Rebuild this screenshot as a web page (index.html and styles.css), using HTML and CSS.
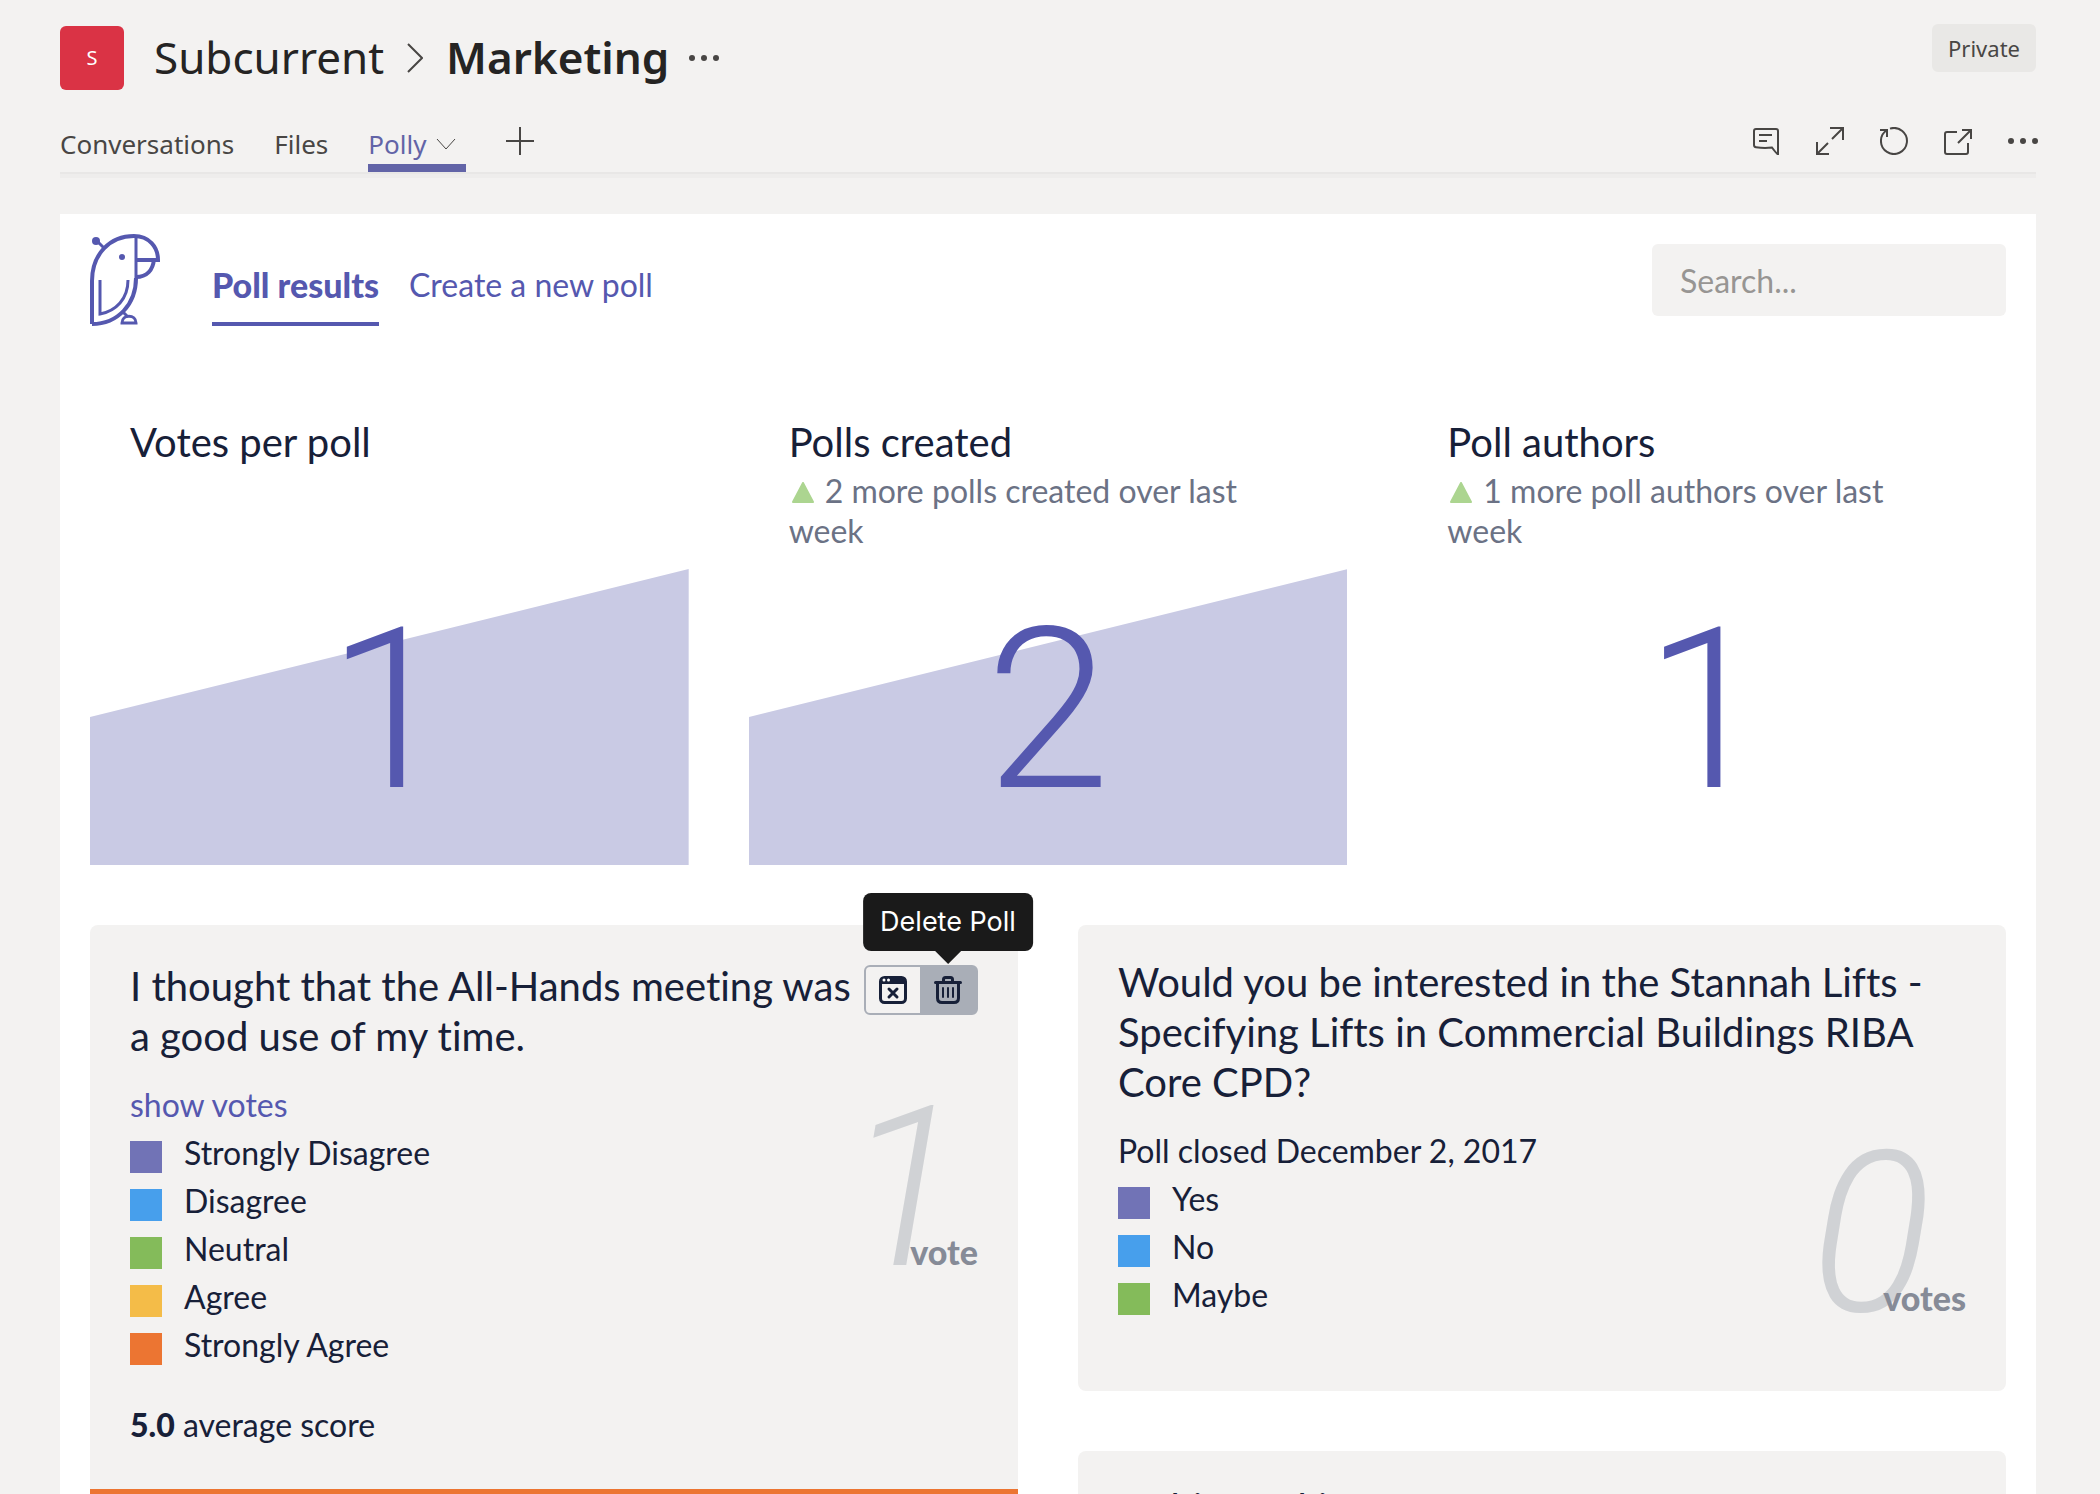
FILE: index.html
```html
<!DOCTYPE html>
<html lang="en">
<head>
<meta charset="utf-8">
<title>Polly – Marketing</title>
<link rel="stylesheet" href="styles.css">
</head>
<body>
<header class="channel">
  <div class="channel-top">
    <div class="avatar">S</div>
    <h1 class="crumbs">
      <span>Subcurrent</span>
      <svg class="crumb-arrow" width="16" height="30" viewBox="0 0 16 30" aria-hidden="true"><path d="M1 1 15 15 1 29"/></svg>
      <strong>Marketing</strong>
    </h1>
    <button class="icon-btn" aria-label="More channel options">
      <svg width="30" height="8" viewBox="0 0 30 8"><g class="fill"><circle cx="3" cy="4" r="3"/><circle cx="15" cy="4" r="3"/><circle cx="27" cy="4" r="3"/></g></svg>
    </button>
    <span class="badge">Private</span>
  </div>
  <nav class="channel-tabs">
    <a class="tab" href="#">Conversations</a>
    <a class="tab" href="#">Files</a>
    <a class="tab tab-active" href="#">Polly
      <svg width="20" height="12" viewBox="0 0 20 12" aria-hidden="true"><path d="M1 1 10 11 19 1"/></svg>
    </a>
    <button class="icon-btn add-tab" aria-label="Add a tab">
      <svg width="28" height="28" viewBox="0 0 28 28"><path d="M14 0V28M0 14H28"/></svg>
    </button>
    <div class="tools">
      <button class="icon-btn" aria-label="Show conversation">
        <svg width="28" height="28" viewBox="0 0 28 28"><path d="M4 2H24Q26 2 26 4V27.500Q24 26 20 20.500Q12 21.500 4 20.200Q2 20 2 18V4Q2 2 4 2ZM7 8H20M7 14H15"/></svg>
      </button>
      <button class="icon-btn" aria-label="Expand tab">
        <svg width="28" height="28" viewBox="0 0 28 28"><path d="M14 1H27V13M27 1 16 12M1 15V27H13M1 27 12 16"/></svg>
      </button>
      <button class="icon-btn" aria-label="Reload tab">
        <svg width="28" height="28" viewBox="0 0 28 28"><path d="M10 1.600A13 13 0 1 1 7 3M0 3H7V10"/></svg>
      </button>
      <button class="icon-btn" aria-label="Go to website">
        <svg width="28" height="28" viewBox="0 0 28 28"><path d="M13 5H3Q1 5 1 7V25Q1 27 3 27H22Q24 27 24 25V16M18 3H27V12M27 3 14 16"/></svg>
      </button>
      <button class="icon-btn" aria-label="More options">
        <svg width="30" height="8" viewBox="0 0 30 8"><g class="fill"><circle cx="3" cy="4" r="3"/><circle cx="15" cy="4" r="3"/><circle cx="27" cy="4" r="3"/></g></svg>
      </button>
    </div>
  </nav>
</header>

<main class="panel">
  <div class="panel-head">
    <svg class="logo" width="70" height="92" viewBox="0 0 70 92" role="img" aria-label="Polly">
      <path class="thick" d="M2 90V47C2 20 20 2 44 2C59 2 68 13 68 26H46"/>
      <path class="thick" d="M2 90C28 90 46 70 46 44"/>
      <path class="thin" d="M46 2V46M15 15 7 7"/>
      <path class="thick" d="M46 43C57 43 63 36 64 25"/>
      <path class="thin" d="M10 46V80C26 77 38 65 38 46M32 77 38 83"/>
      <path class="thin" d="M32 89H46C46 80 32 80 32 89Z"/>
      <circle cx="6" cy="7" r="4"/><circle cx="32" cy="23" r="3"/>
    </svg>
    <nav class="views">
      <a class="view view-active" href="#">Poll results</a>
      <a class="view" href="#">Create a new poll</a>
    </nav>
    <input class="search" type="search" placeholder="Search..." aria-label="Search polls">
  </div>

  <section class="metrics">
    <article class="metric">
      <h2>Votes per poll</h2>
      <div class="chart">
        <svg viewBox="0 0 100 100" preserveAspectRatio="none" aria-hidden="true"><path d="M0 50 100 0V100H0Z"/></svg>
        <span class="figure">1</span>
      </div>
    </article>
    <article class="metric">
      <h2>Polls created</h2>
      <p><svg class="up" width="22" height="21" viewBox="0 0 22 21" aria-hidden="true"><path d="M11 1 21 20H1Z"/></svg>2 more polls created over last week</p>
      <div class="chart">
        <svg viewBox="0 0 100 100" preserveAspectRatio="none" aria-hidden="true"><path d="M0 50 100 0V100H0Z"/></svg>
        <span class="figure">2</span>
      </div>
    </article>
    <article class="metric">
      <h2>Poll authors</h2>
      <p><svg class="up" width="22" height="21" viewBox="0 0 22 21" aria-hidden="true"><path d="M11 1 21 20H1Z"/></svg>1 more poll authors over last week</p>
      <div class="chart"><span class="figure">1</span></div>
    </article>
  </section>

  <section class="polls">
    <div class="poll-column">
      <article class="poll">
        <div class="poll-head poll-head-actions">
          <h2>I thought that the All-Hands meeting was a good use of my time.</h2>
          <div class="actions">
            <button class="action" aria-label="Close Poll">
              <svg width="28" height="28" viewBox="0 0 28 28"><rect x="1.500" y="1.500" width="25" height="25" rx="4"/><path class="fill" d="M1 8V5Q1 1 5 1H23Q27 1 27 5V8Z"/><path class="cross" d="M10 13 18 21M18 13 10 21"/><circle class="dot" cx="5" cy="4" r="1.500"/><circle class="dot" cx="9.500" cy="4" r="1.500"/></svg>
            </button>
            <button class="action action-hover" aria-label="Delete Poll">
              <svg width="28" height="28" viewBox="0 0 28 28"><path d="M1.500 6.500H26.500M9.500 6V3.500Q9.500 1.500 11.500 1.500H16.500Q18.500 1.500 18.500 3.500V6M3.500 7V22Q3.500 26.500 8 26.500H20Q24.500 26.500 24.500 22V7"/><path class="bars" d="M9 12V21M14 12V21M19 12V21"/></svg>
              <span class="tooltip" role="tooltip">Delete Poll</span>
            </button>
          </div>
        </div>
        <div class="poll-body">
          <div>
            <a class="note" href="#">show votes</a>
            <ul class="options">
              <li><i class="swatch c1"></i>Strongly Disagree</li>
              <li><i class="swatch c2"></i>Disagree</li>
              <li><i class="swatch c3"></i>Neutral</li>
              <li><i class="swatch c4"></i>Agree</li>
              <li><i class="swatch c5"></i>Strongly Agree</li>
            </ul>
          </div>
          <div class="tally tally-single"><span class="count">1</span><b>vote</b></div>
        </div>
        <p class="score"><b>5.0</b> average score</p>
        <div class="result-bar c5"></div>
      </article>
    </div>
    <div class="poll-column">
      <article class="poll">
        <div class="poll-head">
          <h2>Would you be interested in the Stannah Lifts - Specifying Lifts in Commercial Buildings RIBA Core CPD?</h2>
        </div>
        <div class="poll-body">
          <div>
            <span class="note">Poll closed December 2, 2017</span>
            <ul class="options">
              <li><i class="swatch c1"></i>Yes</li>
              <li><i class="swatch c2"></i>No</li>
              <li><i class="swatch c3"></i>Maybe</li>
            </ul>
          </div>
          <div class="tally"><span class="count">0</span><b>votes</b></div>
        </div>
      </article>
      <article class="poll">
        <div class="poll-head">
          <h2>Is this working</h2>
        </div>
      </article>
    </div>
  </section>
</main>
</body>
</html>
```
FILE: styles.css
```css
* { box-sizing: border-box; }
body {
  margin: 0;
  padding: 0 64px 0 60px;
  background: #f3f2f1;
  color: #172038;
  font: 32px/40px Lato, sans-serif;
  font-variant-ligatures: none;
}
h1, h2, p, ul { margin: 0; padding: 0; font-weight: 400; }
a { color: #5558af; text-decoration: none; }
svg { display: block; flex: none; }

/* Channel header */
.channel { font-family: "Noto Sans", sans-serif; color: #484644; }
.channel svg { fill: none; stroke: #484644; stroke-width: 2; }
.channel .fill { fill: #484644; stroke: none; }
.icon-btn { display: flex; padding: 0; border: 0; background: none; }
.channel-top { display: flex; align-items: center; height: 92px; padding-top: 24px; }
.avatar {
  width: 64px;
  height: 64px;
  margin-right: 30px;
  border-radius: 6px;
  background: #da3345;
  color: #fff;
  font-size: 20px;
  line-height: 64px;
  text-align: center;
}
.crumbs {
  display: flex;
  align-items: center;
  gap: 23px;
  margin-right: 20px;
  color: #252423;
  font-size: 44px;
  line-height: 60px;
}
.crumbs span, .crumbs strong { padding-bottom: 2px; }
.crumbs strong { font-weight: 600; }
.badge {
  align-self: flex-start;
  margin-left: auto;
  padding: 0 16px;
  border-radius: 6px;
  background: #e9e8e6;
  font-size: 22px;
  line-height: 48px;
}
.channel-tabs {
  display: flex;
  align-items: flex-end;
  gap: 40px;
  height: 86px;
  border-bottom: 4px solid #eeedec;
  box-shadow: inset 0 -2px #e8e7e6;
  padding-bottom: 2px;
}
.tab {
  display: flex;
  align-items: center;
  gap: 10px;
  padding-bottom: 2px;
  border-bottom: 8px solid transparent;
  color: #484644;
  font-size: 26px;
  line-height: 36px;
}
.tab-active { padding-right: 10px; border-color: #6264a7; color: #6264a7; }
.channel .tab-active svg { stroke-width: 1; }
.add-tab { margin-bottom: 17px; }
.tools { display: flex; align-items: center; gap: 36px; margin: 0 -2px 17px auto; }

/* Panel */
.panel { margin-top: 36px; padding: 20px 30px 60px; background: #fff; }
.panel-head { display: flex; align-items: flex-end; height: 92px; }
.logo { margin-right: 52px; fill: #5558af; }
.logo path { fill: none; stroke: #5558af; }
.logo .thick { stroke-width: 4; }
.logo .thin { stroke-width: 3; }
.views { display: flex; gap: 30px; }
.view { padding-bottom: 17px; border-bottom: 4px solid transparent; }
.view-active { border-color: #5558af; font-size: 34px; font-weight: 900; }
.search {
  width: 354px;
  height: 72px;
  margin: 0 0 10px auto;
  padding: 0 28px;
  border: 0;
  border-radius: 6px;
  background: #f3f2f1;
  color: inherit;
  font: inherit;
}
.search::placeholder { color: #979593; }

/* Metrics */
.metrics { display: grid; grid-template-columns: repeat(3, 1fr); gap: 60px; margin-top: 94px; }
.metric { display: flex; flex-direction: column; }
.metric h2 { padding: 0 40px; margin-bottom: 7px; font-size: 40px; line-height: 44px; }
.metric p { padding: 0 60px 0 40px; margin-bottom: 18px; color: #6b7285; }
.up { display: inline-block; margin: 0 11px 0 3px; fill: #acd590; stroke: #acd590; stroke-width: 2; stroke-linejoin: round; }
.chart { display: grid; height: 296px; margin-top: auto; }
.chart > * { grid-area: 1 / 1; }
.chart svg { width: 100%; height: 296px; fill: #c9cae4; }
.figure, .count { font-family: Roboto, sans-serif; font-size: 224px; font-weight: 300; }
.figure { z-index: 1; color: #5558af; line-height: 284px; text-align: center; }

/* Polls */
.polls { display: grid; grid-template-columns: repeat(2, 1fr); gap: 60px; margin-top: 60px; }
.poll-column { display: flex; flex-direction: column; gap: 60px; }
.poll { padding: 32px 40px 44px; border-radius: 8px; background: #f3f2f1; }
.poll:has(.result-bar) { padding-bottom: 0; }
.poll-head { display: flex; margin-bottom: 24px; }
.poll-head-actions { padding-top: 4px; }
.poll h2 { flex: 1; font-size: 40px; line-height: 50px; }
.actions {
  display: flex;
  height: 50px;
  margin-top: 4px;
  border: 2px solid #a9aeb7;
  border-radius: 6px;
}
.action {
  position: relative;
  display: flex;
  align-items: center;
  justify-content: center;
  width: 54px;
  padding: 0;
  border: 0;
  background: none;
}
.action-hover { width: 56px; background: #a9aeb7; }
.action svg { fill: none; stroke: #172038; stroke-width: 3; stroke-linecap: round; }
.action .fill { fill: #172038; stroke: none; }
.action .dot { fill: #fff; stroke: none; }
.action .bars { stroke-width: 2; }
.tooltip {
  position: absolute;
  bottom: 62px;
  left: 50%;
  padding: 0 17px;
  border-radius: 8px;
  background: #1a1a1a;
  color: #fff;
  font: 27px/58px Inter, sans-serif;
  white-space: nowrap;
  transform: translateX(-50%);
}
.tooltip::after {
  content: "";
  position: absolute;
  top: 100%;
  left: 50%;
  margin-left: -13px;
  border: 13px solid transparent;
  border-top-color: #1a1a1a;
  border-bottom: 0;
}
.poll-body { display: flex; justify-content: space-between; padding-bottom: 8px; }
.note { display: block; margin-bottom: 4px; }
.options { list-style: none; }
.options li { display: flex; gap: 22px; line-height: 48px; }
.swatch { width: 32px; height: 32px; margin-top: 12px; }
.c1 { background: #7173b6; }
.c2 { background: #479fec; }
.c3 { background: #84bb5a; }
.c4 { background: #f4bc48; }
.c5 { background: #ec7532; }
.tally { display: flex; align-items: baseline; height: 208px; line-height: 208px; }
.count { color: #d0d2d5; font-style: italic; }
.tally b { z-index: 1; margin-left: -48px; color: #868b97; font-size: 34px; font-weight: 900; }
.tally-single b { margin-left: -54px; }
.score { margin: 28px 0 44px; }
.score b { font-weight: 900; }
.result-bar { height: 80px; margin: 0 -40px; }
```
